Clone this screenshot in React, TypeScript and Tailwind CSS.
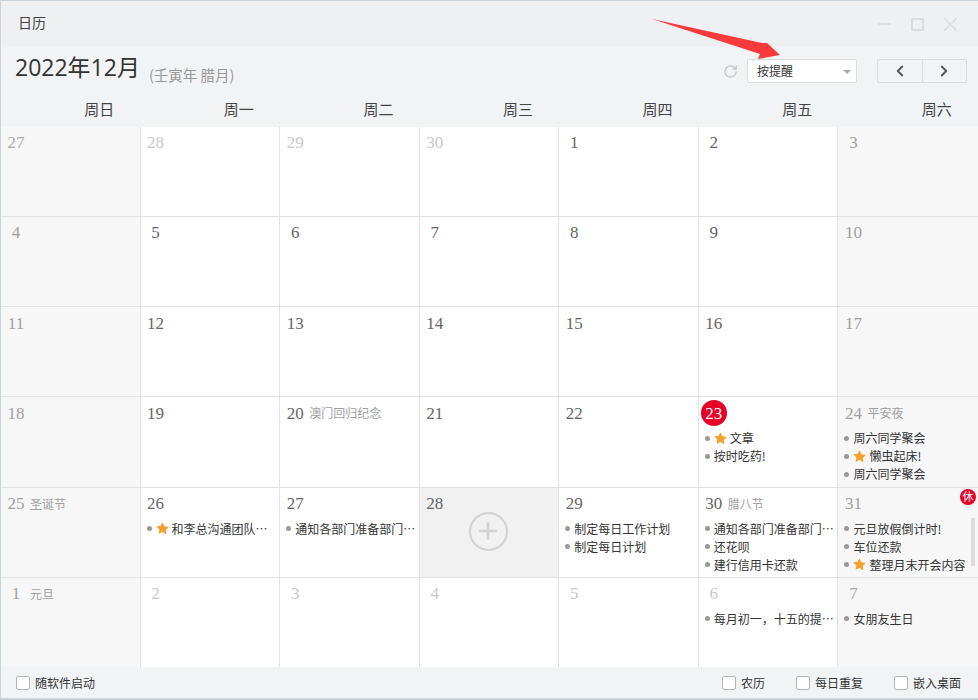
import { RotateCw, ChevronLeft, ChevronRight, Plus } from 'lucide-react';

type Item = { text: string; star?: boolean };
type Day = {
  num: string;
  note?: string;
  muted?: boolean;
  weekend?: boolean;
  items?: Item[];
  today?: boolean;
  hover?: boolean;
  rest?: boolean;
};

const weekDays = ['周日', '周一', '周二', '周三', '周四', '周五', '周六'];

const n = (num: string, muted = false, weekend = false): Day => ({ num, muted, weekend });

const weeks: Day[][] = [
  [n('27', true, true), n('28', true), n('29', true), n('30', true), n('1'), n('2'), n('3', false, true)],
  [n('4', false, true), n('5'), n('6'), n('7'), n('8'), n('9'), n('10', false, true)],
  [n('11', false, true), n('12'), n('13'), n('14'), n('15'), n('16'), n('17', false, true)],
  [
    n('18', false, true),
    n('19'),
    { num: '20', note: '澳门回归纪念' },
    n('21'),
    n('22'),
    { num: '23', today: true, items: [{ text: '文章', star: true }, { text: '按时吃药!' }] },
    {
      num: '24',
      note: '平安夜',
      weekend: true,
      items: [{ text: '周六同学聚会' }, { text: '懒虫起床!', star: true }, { text: '周六同学聚会' }],
    },
  ],
  [
    { num: '25', note: '圣诞节', weekend: true },
    { num: '26', items: [{ text: '和李总沟通团队建设', star: true }] },
    { num: '27', items: [{ text: '通知各部门准备部门总结' }] },
    { num: '28', hover: true },
    { num: '29', items: [{ text: '制定每日工作计划' }, { text: '制定每日计划' }] },
    {
      num: '30',
      note: '腊八节',
      items: [{ text: '通知各部门准备部门总结' }, { text: '还花呗' }, { text: '建行信用卡还款' }],
    },
    {
      num: '31',
      weekend: true,
      rest: true,
      items: [
        { text: '元旦放假倒计时!' },
        { text: '车位还款' },
        { text: '整理月末开会内容', star: true },
        { text: '周末计划' },
      ],
    },
  ],
  [
    { num: '1', note: '元旦', weekend: true },
    n('2', true),
    n('3', true),
    n('4', true),
    n('5', true),
    { num: '6', muted: true, items: [{ text: '每月初一\uFF0C十五的提醒事项' }] },
    { num: '7', muted: true, weekend: true, items: [{ text: '女朋友生日' }] },
  ],
];

function Star() {
  return (
    <svg viewBox="0 0 24 24" className="w-[13px] h-[13px] shrink-0 mr-[3px] fill-[#f7a02c] stroke-[#f7a02c] stroke-2" strokeLinejoin="round">
      <path d="M12 2.5l2.9 6.4 7 .8-5.2 4.7 1.4 6.9L12 17l-6.1 3.3 1.4-6.9-5.2-4.7 7-.8z" />
    </svg>
  );
}

function DayCell({ day, last }: { day: Day; last: boolean }) {
  const bg = day.hover ? 'bg-[#f1f1f1]' : day.weekend ? 'bg-[#f7f7f8]' : 'bg-white';
  const numColor = day.muted
    ? day.weekend
      ? 'text-[#aaaaaa]'
      : 'text-[#c8c8c8]'
    : day.weekend
      ? 'text-[#a0a0a0]'
      : 'text-[#666666]';
  return (
    <div className={`relative min-w-0 h-full overflow-hidden ${bg} ${last ? '' : 'border-r border-[#e2e2e4]'}`}>
      <div className="flex items-center h-[32px] pl-[6px]">
        {day.today ? (
          <span className="w-[26px] h-[26px] -ml-[4px] rounded-full bg-[#e60026] text-white flex items-center justify-center text-[17px] font-['Liberation_Serif',serif]">
            {day.num}
          </span>
        ) : (
          <span className={`min-w-[18px] text-center text-[17px] font-['Liberation_Serif',serif] ${numColor}`}>{day.num}</span>
        )}
        {day.note && <span className="ml-[5px] text-[12px] text-[#a0a0a0]">{day.note}</span>}
      </div>
      {day.items && (
        <ul className="pl-[6px] pr-[2px]">
          {day.items.map((item) => (
            <li key={item.text} className="flex items-center h-[18px] text-[12px] text-[#333333]">
              <span className="w-[5px] h-[5px] rounded-full bg-[#999999] shrink-0 mr-[4px]" />
              {item.star && <Star />}
              <span className="truncate">{item.text}</span>
            </li>
          ))}
        </ul>
      )}
      {day.hover && (
        <div className="absolute left-[49px] top-[24px] w-[39px] h-[39px] rounded-full border-[2.5px] border-[#d2d2d2] flex items-center justify-center">
          <Plus className="w-[26px] h-[26px] text-[#d2d2d2]" strokeWidth={2.5} />
        </div>
      )}
      {day.rest && (
        <>
          <span className="absolute right-[2px] top-[1px] w-[16px] h-[16px] rounded-full bg-[#e60026] text-white text-[11px] leading-none flex items-center justify-center">
            休
          </span>
          <span className="absolute right-[3px] top-[30px] w-[4px] h-[48px] bg-[#dcdcdc]" />
        </>
      )}
    </div>
  );
}

function Check({ label, className }: { label: string; className?: string }) {
  return (
    <label className={`flex items-center text-[12px] text-[#333333] ${className ?? ''}`}>
      <span className="w-[14px] h-[14px] rounded-[2px] border border-[#b4b4b4] bg-white mr-[5px]" />
      {label}
    </label>
  );
}

export default function App() {
  return (
    <div className="relative w-[978px] h-[700px] flex flex-col overflow-hidden bg-[#f2f3f5] border-t border-l border-b-2 border-[#c8d4dc] text-[#333333] font-['Noto_Sans_CJK_SC','Noto_Sans',sans-serif]">
      {/* Title bar */}
      <div className="h-[46px] shrink-0 flex items-center justify-between bg-[#eff0f2] pl-[17px] pr-[21px]">
        <span className="text-[14px] text-[#444444] mb-[4px]">日历</span>
        <div className="flex items-center gap-[20px]">
          <span className="w-[13px] h-[2px] bg-[#e0e0e0]" />
          <span className="w-[13px] h-[13px] border-2 border-[#dcdcdc]" />
          <svg viewBox="0 0 13 13" className="w-[13px] h-[13px] stroke-[#dcdcdc] stroke-[1.5]">
            <path d="M0 0L13 13M13 0L0 13" />
          </svg>
        </div>
      </div>

      {/* Month header */}
      <div className="h-[50px] shrink-0 flex items-center pl-[14px] pr-[11px]">
        <span className="text-[23px] leading-none font-['Open_Sans','Noto_Sans_CJK_SC',sans-serif] text-[#333333] mb-[10px]">2022年12月</span>
        <span className="ml-[9px] mt-[5px] text-[14.5px] text-[#999999]">(壬寅年 腊月)</span>
        <div className="ml-auto flex items-center mb-[2px]">
          <RotateCw className="w-[15px] h-[15px] text-[#c4c4c4] mr-[9px]" strokeWidth={2} />
          <div className="relative w-[110px] h-[24px] bg-white border border-[#dcdcdc] rounded-[2px] flex items-center pl-[9px] text-[12px] text-[#333333]">
            按提醒
            <span className="absolute right-[5px] top-[10px] w-0 h-0 border-l-[4px] border-r-[4px] border-t-[4px] border-l-transparent border-r-transparent border-t-[#a8a8a8]" />
          </div>
          <div className="ml-[20px] w-[90px] h-[24px] flex border border-[#dcdcdc] rounded-[2px]">
            <div className="flex-1 flex items-center justify-center border-r border-[#dcdcdc]">
              <ChevronLeft className="w-[18px] h-[18px] text-[#555555]" strokeWidth={2.5} />
            </div>
            <div className="flex-1 flex items-center justify-center">
              <ChevronRight className="w-[18px] h-[18px] text-[#555555]" strokeWidth={2.5} />
            </div>
          </div>
        </div>
      </div>

      {/* Week header */}
      <div className="h-[30px] shrink-0 grid grid-cols-7 text-[15px] text-[#444444]">
        {weekDays.map((d) => (
          <div key={d} className="flex items-center justify-center pl-[57px] pb-[6px]">
            {d}
          </div>
        ))}
      </div>

      {/* Calendar grid */}
      <div className="h-[540px] shrink-0 grid grid-rows-6 gap-y-[1px] bg-[#e2e2e4]">
        {weeks.map((week, i) => (
          <div key={i} className="grid grid-cols-7 min-h-0">
            {week.map((day, j) => (
              <DayCell key={j} day={day} last={j === 6} />
            ))}
          </div>
        ))}
      </div>

      {/* Footer */}
      <div className="flex-1 flex items-center pl-[15px] pr-[17px] bg-[#f2f3f5]">
        <Check label="随软件启动" />
        <Check label="农历" className="ml-auto" />
        <Check label="每日重复" className="ml-[31px]" />
        <Check label="嵌入桌面" className="ml-[31px]" />
      </div>

      {/* Annotation arrow */}
      <svg className="absolute left-[651px] top-[17px] w-[130px] h-[42px] pointer-events-none" viewBox="0 0 130 42">
        <path d="M0 1L110 25L115 25L128 37L106 41L108 36Z" fill="#fb3b3b" />
      </svg>
    </div>
  );
}
